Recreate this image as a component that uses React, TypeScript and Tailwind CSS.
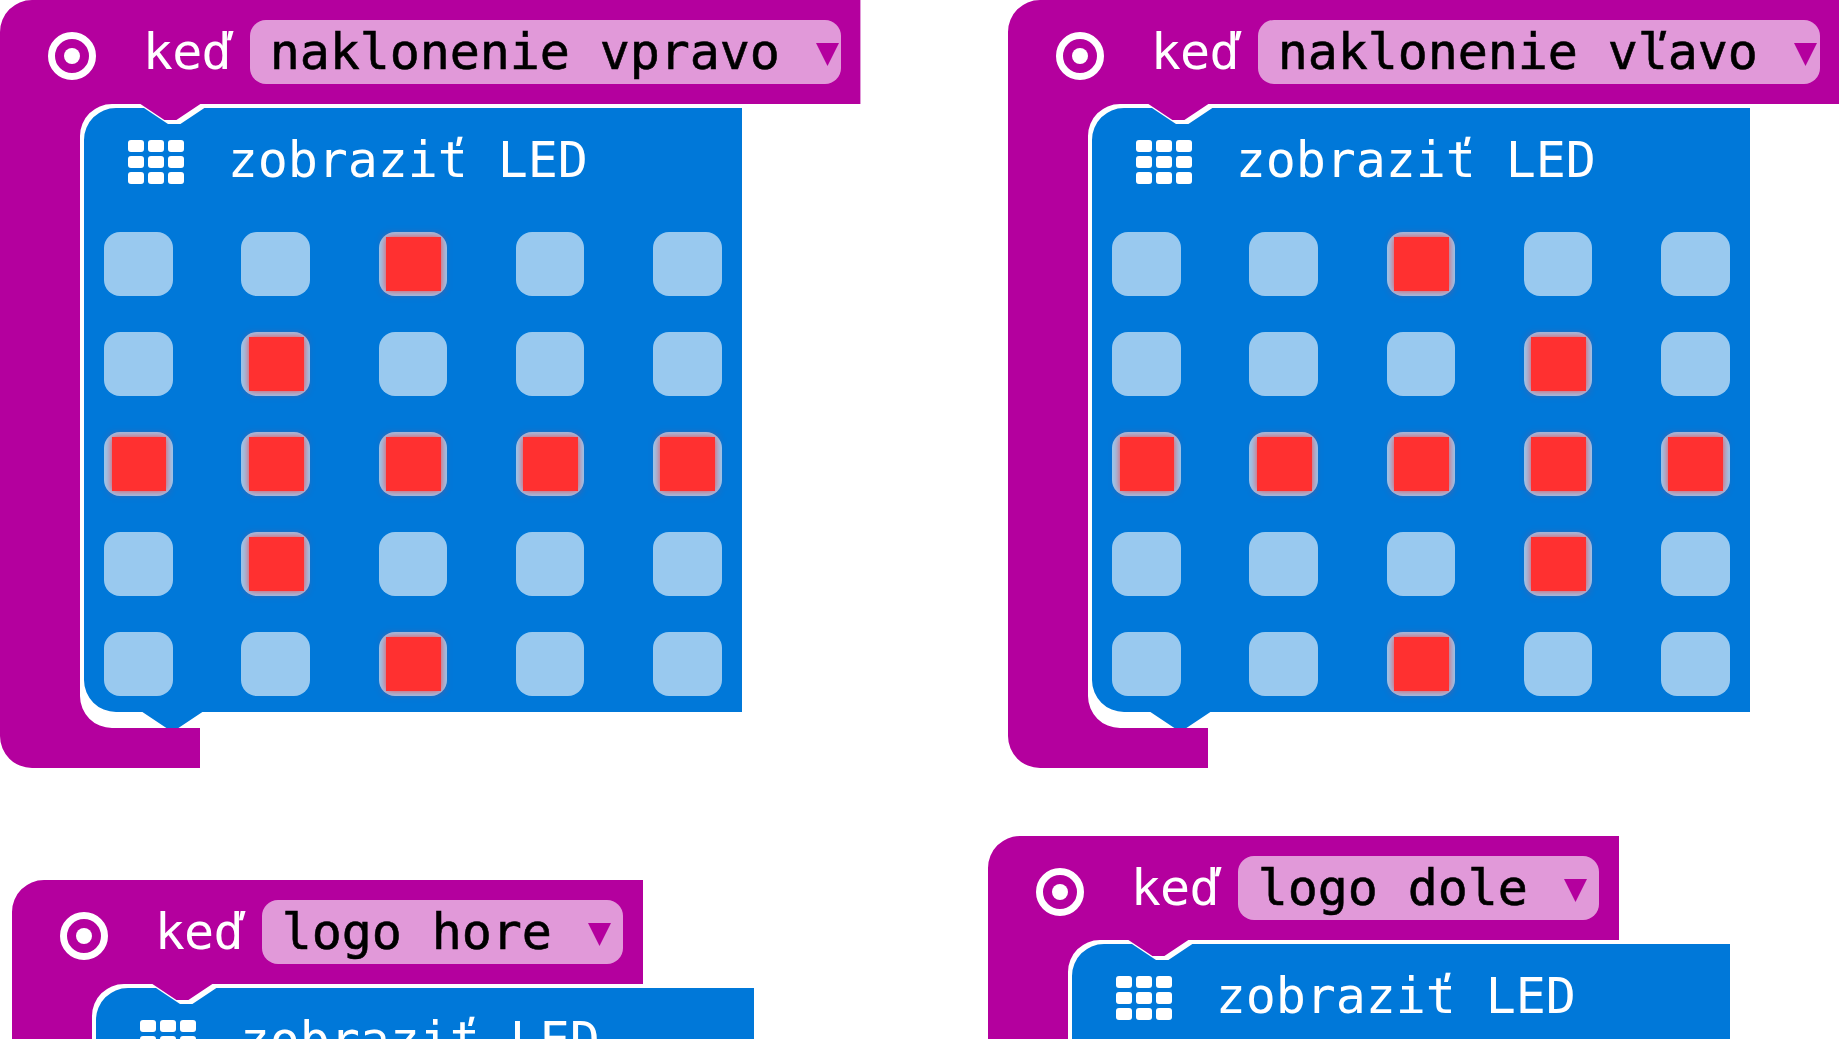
type EventBlockProps = {
  label: string;
  width: number;
  place: string;
  pill: string;
  pixels: string[];
};

const FONT = "font-['DejaVu_Sans_Mono','Liberation_Mono',monospace]";

function RingIcon() {
  return (
    <svg className="h-12 w-12 shrink-0" viewBox="0 0 48 48">
      <circle cx="24" cy="24" r="20.5" fill="none" stroke="white" strokeWidth="7" />
      <circle cx="24" cy="24" r="8" fill="white" />
    </svg>
  );
}

function GridIcon() {
  return (
    <svg className="h-11 w-14 shrink-0" viewBox="0 0 56 44" fill="white">
      {[0, 16, 32].map((y) =>
        [0, 20, 40].map((x) => <rect key={`${x}-${y}`} x={x} y={y} width="16" height="12" rx="3" />),
      )}
    </svg>
  );
}

function Led({ on }: { on: boolean }) {
  return (
    <div className="h-16 w-[68.6px] rounded-2xl bg-[#99c9ef] pt-[5px] pl-[7.4px]">
      {on && <div className="h-[54.4px] w-[54.8px] bg-[#ff3030] shadow-[0_0_8px_rgba(255,48,48,0.9)]" />}
    </div>
  );
}

function EventBlock({ label, width, place, pill, pixels }: EventBlockProps) {
  return (
    <section className={`absolute h-[768px] ${place}`}>
      {/* Outlines of the bracket-shaped event block and the statement nested in it */}
      <svg className="absolute inset-0 h-full w-full" overflow="visible">
        <path
          fill="#b4009e"
          d={`M32 0H${width}V104H200.4L176.4 120H164.4L140.4 104H112A32 32 0 0 0 80 136V696A32 32 0 0 0 112 728H200V768H32A32 32 0 0 1 0 736V32A32 32 0 0 1 32 0Z`}
        />
        <path
          fill="#0078d9"
          d="M116 108H144L168 124H180.4L204.4 108H742V712H202.4L178.4 728H166.4L142.4 712H116A32 32 0 0 1 84 680V140A32 32 0 0 1 116 108Z"
        />
      </svg>
      <div className="relative flex h-full flex-col">
        <header className="flex h-[104px] shrink-0 items-start pl-12">
          <div className="pt-8">
            <RingIcon />
          </div>
          <span className="ml-[46.5px] w-[107.5px] pt-[23px] text-[50px] leading-[58px] tracking-[-0.7px] whitespace-pre text-white">
            keď
          </span>
          <div className={`mt-5 flex h-16 shrink-0 items-start justify-between rounded-2xl bg-[#e199d9] pl-[19.5px] ${pill}`}>
            <span className="pt-[3px] text-[50px] leading-[58px] tracking-[-0.1px] whitespace-pre text-black [-webkit-text-stroke:0.6px_black]">
              {label}
            </span>
            <svg className="mt-[23px] h-[23px] w-[23px] shrink-0" viewBox="0 0 23 23">
              <path d="M0 0H23L11.5 23Z" fill="#b4009e" />
            </svg>
          </div>
        </header>
        <div className="ml-[84px] flex w-[658px] flex-col pt-1">
          <div className="flex h-[124px] pt-8 pl-11">
            <GridIcon />
            <span className="-mt-[9px] ml-[43.5px] text-[50px] leading-[58px] tracking-[-0.1px] whitespace-pre text-white">
              zobraziť LED
            </span>
          </div>
          <div className="grid grid-cols-[repeat(5,68.6px)] gap-x-[68.6px] gap-y-9 pl-5">
            {pixels.map((row, y) => row.split("").map((c, x) => <Led key={`${x}-${y}`} on={c === "#"} />))}
          </div>
        </div>
      </div>
    </section>
  );
}

const LEFT_ARROW = ["..#..", ".#...", "#####", ".#...", "..#.."];
const RIGHT_ARROW = ["..#..", "...#.", "#####", "...#.", "..#.."];
const UP_ARROW = ["..#..", ".###.", "#.#.#", "..#..", "..#.."];
const DOWN_ARROW = ["..#..", "..#..", "#.#.#", ".###.", "..#.."];

export default function App() {
  return (
    <main className={`relative h-[1039px] w-[1839px] overflow-hidden bg-white ${FONT}`}>
      <EventBlock
        label="naklonenie vpravo"
        width={860.4}
        place="left-[0.3px] top-0 w-[860.4px]"
        pill="w-[590.4px] pr-[1.5px]"
        pixels={LEFT_ARROW}
      />
      <EventBlock
        label="naklonenie vľavo"
        width={831.8}
        place="left-[1008.2px] top-0 w-[831.8px]"
        pill="w-[561.8px] pr-[3px]"
        pixels={RIGHT_ARROW}
      />
      <EventBlock
        label="logo hore"
        width={631}
        place="left-[12.2px] top-[880px] w-[631px]"
        pill="w-[361px] pr-3"
        pixels={UP_ARROW}
      />
      <EventBlock
        label="logo dole"
        width={631}
        place="left-[988.2px] top-[836px] w-[631px]"
        pill="w-[361px] pr-3"
        pixels={DOWN_ARROW}
      />
    </main>
  );
}
